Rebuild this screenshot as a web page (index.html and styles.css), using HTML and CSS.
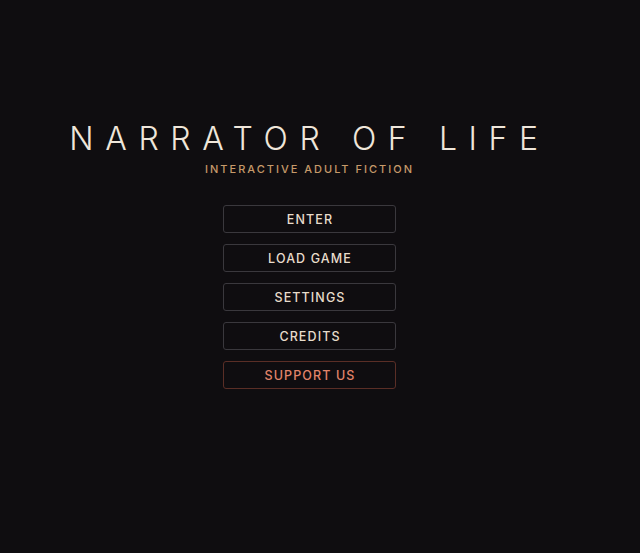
FILE: index.html
```html
<!DOCTYPE html>
<html lang="en">
<head>
<meta charset="utf-8">
<title>Narrator of Life</title>
<link rel="stylesheet" href="styles.css">
</head>
<body>
<main class="screen">
  <header class="brand">
    <h1 class="title">NARRATOR OF LIFE</h1>
    <p class="subtitle">INTERACTIVE ADULT FICTION</p>
  </header>
  <nav class="menu">
    <button class="btn">ENTER</button>
    <button class="btn">LOAD GAME</button>
    <button class="btn">SETTINGS</button>
    <button class="btn">CREDITS</button>
    <button class="btn btn-support">SUPPORT US</button>
  </nav>
</main>
</body>
</html>
```
FILE: styles.css
```css
html, body {
  margin: 0;
  padding: 0;
  background: #0f0d10;
  height: 100%;
}
body {
  font-family: Inter, "Noto Sans", sans-serif;
}
.screen {
  width: 619px;
  display: flex;
  flex-direction: column;
  align-items: center;
  padding-top: 123px;
}
.brand {
  display: flex;
  flex-direction: column;
  align-items: center;
}
.title {
  margin: 0;
  font-size: 32px;
  line-height: 1;
  font-weight: 300;
  letter-spacing: 11.6px;
  color: #efe6da;
}
.subtitle {
  margin: 9px 0 0;
  font-size: 11px;
  line-height: 1;
  font-weight: 500;
  letter-spacing: 2px;
  color: #c69a6a;
}
.menu {
  margin-top: 30px;
  display: flex;
  flex-direction: column;
  gap: 11px;
}
.btn {
  width: 173px;
  height: 28px;
  background: #0f0d10;
  border: 1px solid #3a383d;
  border-radius: 3px;
  color: #e8dccb;
  font-family: Inter, "Noto Sans", sans-serif;
  font-size: 12.5px;
  font-weight: 500;
  letter-spacing: 1.1px;
  padding: 0 0 0 1px;
}
.btn-support {
  color: #e2846a;
  border-color: #5a2e26;
}
```
